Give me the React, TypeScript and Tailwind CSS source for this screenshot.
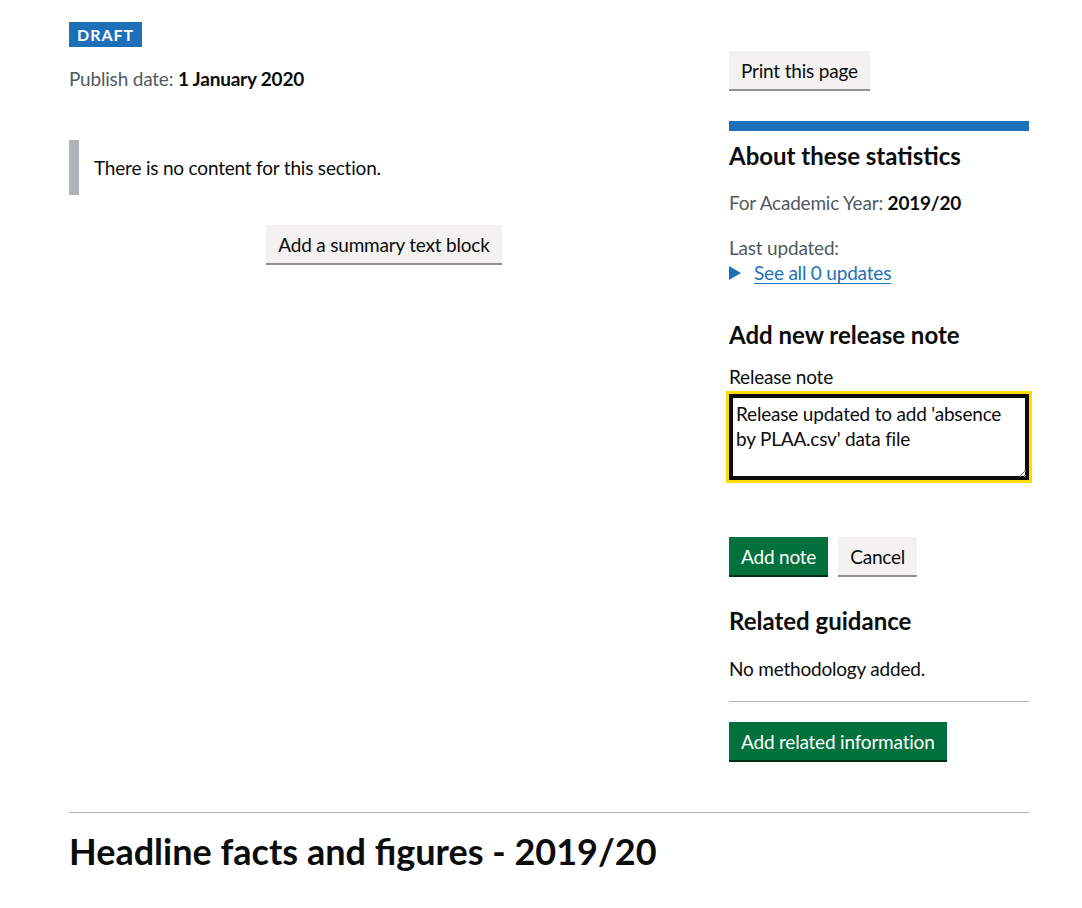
import React from "react";

const font = { fontFamily: "Lato, 'Liberation Sans', Arial, sans-serif" };

function Button({ children, variant = "secondary" }: { children: React.ReactNode; variant?: "primary" | "secondary" }) {
  const styles =
    variant === "primary"
      ? "bg-[#00703c] text-white shadow-[0_2px_0_#002d18]"
      : "bg-[#f3f2f1] text-[#0b0c0c] shadow-[0_2px_0_#929191]";
  return (
    <button className={`${styles} h-[38px] px-[10px] text-[19px] leading-[19px] tracking-[-0.2px] border-2 border-transparent`}>
      {children}
    </button>
  );
}

export default function App() {
  return (
    <div className="min-h-[908px] bg-white text-[#0b0c0c] tracking-[-0.2px]" style={font}>
      <div className="ml-[69px] w-[960px] pt-[22px]">
        <div className="flex gap-[30px]">
          {/* main column */}
          <div className="w-[630px]">
            <span className="inline-block bg-[#1d70b8] text-white font-bold text-[16px] leading-[16px] tracking-[1px] px-2 pt-[5px] pb-[4px]">
              DRAFT
            </span>
            <p className="mt-[19px] text-[19px] leading-[25px] text-[#505a5f]">
              Publish date: <strong className="text-[#0b0c0c] font-bold">1 January 2020</strong>
            </p>
            <div className="mt-[49px] border-l-[10px] border-[#b1b4b6] py-[15px] pl-[15px] text-[19px] leading-[25px]">
              There is no content for this section.
            </div>
            <div className="mt-[30px] flex justify-center">
              <Button>Add a summary text block</Button>
            </div>
          </div>

          {/* sidebar */}
          <aside className="w-[300px] pt-[29px]">
            <Button>Print this page</Button>
            <div className="mt-[32px] h-[10px] bg-[#1d70b8]" />
            <h2 className="mt-[10px] text-[24px] leading-[30px] font-bold tracking-[0px]">About these statistics</h2>
            <p className="mt-[19px] text-[19px] leading-[25px] text-[#505a5f]">
              For Academic Year: <strong className="text-[#0b0c0c] font-bold">2019/20</strong>
            </p>
            <p className="mt-[20px] text-[19px] leading-[25px] text-[#505a5f]">Last updated:</p>
            <div className="flex items-center text-[19px] leading-[25px]">
              <svg width="13" height="14" viewBox="0 0 13 14" className="mr-[12px]">
                <path d="M0 0 L12 7 L0 14 Z" fill="#1d70b8" />
              </svg>
              <a href="#" className="text-[#1d70b8] underline underline-offset-[3px]">
                See all 0 updates
              </a>
            </div>
            <h2 className="mt-[35px] text-[24px] leading-[30px] font-bold tracking-[0px]">Add new release note</h2>
            <label className="block mt-[14px] text-[19px] leading-[25px]">Release note</label>
            <textarea
              className="block mt-[5px] w-[300px] h-[86px] border-2 border-[#0b0c0c] shadow-[inset_0_0_0_2px_#0b0c0c] outline-[3px] outline-solid outline-[#ffdd00] px-[5px] pt-[5px] text-[19px] leading-[25px] tracking-[-0.2px] text-[#0b0c0c] resize-y"
              style={font}
              defaultValue={"Release updated to add 'absence by PLAA.csv' data file"}
            />
            <div className="mt-[57px] flex gap-[10px]">
              <Button variant="primary">Add note</Button>
              <Button>Cancel</Button>
            </div>
            <h2 className="mt-[31px] text-[24px] leading-[30px] font-bold tracking-[0px]">Related guidance</h2>
            <p className="mt-[20px] text-[19px] leading-[25px]">No methodology added.</p>
            <hr className="mt-[20px] border-0 border-t border-[#b1b4b6]" />
            <div className="mt-[20px]">
              <Button variant="primary">Add related information</Button>
            </div>
          </aside>
        </div>
        <hr className="mt-[52px] border-0 border-t border-[#b1b4b6]" />
        <h1 className="mt-[18px] text-[36px] leading-[40px] font-bold tracking-[0px]">Headline facts and figures - 2019/20</h1>
      </div>
    </div>
  );
}
